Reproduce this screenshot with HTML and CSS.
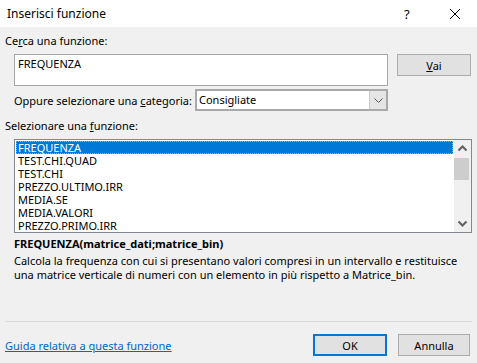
FILE: index.html
```html
<!DOCTYPE html>
<html lang="it">
<head>
    <meta charset="UTF-8">
    <title>Inserisci funzione</title>
    <link rel="stylesheet" href="styles.css">
</head>
<body>
    <div class="dialog">
        <div class="titlebar">
            <span class="title">Inserisci funzione</span>
            <span class="help">?</span>
            <svg class="close" width="12" height="12" viewBox="0 0 12 12">
                <path d="M1 1 L11 11 M11 1 L1 11" stroke="#000" stroke-width="1" fill="none"/>
            </svg>
        </div>

        <div class="content">
            <div class="label">Ce<u>r</u>ca una funzione:</div>
            <div class="search-row">
                <div class="search-box">FREQUENZA</div>
                <button class="btn btn-go"><u>V</u>ai</button>
            </div>
            <div class="category-row">
                <span>Oppure selezionare una <u>c</u>ategoria:</span>
                <div class="select">
                    <span class="select-value">Consigliate</span>
                    <span class="select-arrow">
                        <svg width="9" height="5" viewBox="0 0 9 5">
                            <path d="M0.5 0.5 L4.5 4.5 L8.5 0.5" stroke="#555" stroke-width="1" fill="none"/>
                        </svg>
                    </span>
                </div>
            </div>

            <div class="label label-list">Selezionare una <u>f</u>unzione:</div>
            <div class="listbox">
                <ul class="items">
                    <li class="selected">FREQUENZA</li>
                    <li>TEST.CHI.QUAD</li>
                    <li>TEST.CHI</li>
                    <li>PREZZO.ULTIMO.IRR</li>
                    <li>MEDIA.SE</li>
                    <li>MEDIA.VALORI</li>
                    <li>PREZZO.PRIMO.IRR</li>
                </ul>
                <div class="scrollbar">
                    <svg width="17" height="17" viewBox="0 0 17 17">
                        <path d="M4.5 10.5 L8.5 6.5 L12.5 10.5" stroke="#606060" stroke-width="2" fill="none"/>
                    </svg>
                    <div class="thumb"></div>
                    <svg class="down" width="17" height="17" viewBox="0 0 17 17">
                        <path d="M4.5 6.5 L8.5 10.5 L12.5 6.5" stroke="#606060" stroke-width="2" fill="none"/>
                    </svg>
                </div>
            </div>

            <div class="signature">FREQUENZA(matrice_dati;matrice_bin)</div>
            <p class="description">Calcola la frequenza con cui si presentano valori compresi in un intervallo e restituisce<br>una matrice verticale di numeri con un elemento in più rispetto a Matrice_bin.</p>

            <div class="separator"></div>

            <div class="footer">
                <a href="#" class="help-link">Guida relativa a questa funzione</a>
                <button class="btn btn-ok">OK</button>
                <button class="btn btn-cancel">Annulla</button>
            </div>
        </div>
    </div>
</body>
</html>
```

FILE: styles.css
```css
body {
    margin: 0;
    font-family: "Noto Sans", "Open Sans", sans-serif;
    font-size: 11px;
    color: #000;
    background-color: #f0f0f0;
}
.dialog {
    width: 477px;
    height: 363px;
    background: #f0f0f0;
    overflow: hidden;
}
.titlebar {
    height: 27px;
    background: #fff;
    display: flex;
    align-items: center;
    padding-left: 7px;
    font-size: 12px;
}
.title {
    flex: 1;
}
.help {
    width: 14px;
    margin-right: 31px;
    font-size: 13px;
}
.close {
    margin-right: 16px;
}
.content {
    padding: 0 5px;
}
.label {
    height: 14px;
    line-height: 14px;
    margin-top: 7px;
}
.search-row {
    display: flex;
    align-items: flex-start;
    margin: 6px 0 0 9px;
}
.search-box {
    width: 374px;
    height: 32px;
    box-sizing: border-box;
    border: 1px solid #a5a5a5;
    background: #fff;
    padding: 2px 3px;
    line-height: 14px;
}
.btn {
    font: inherit;
    color: #000;
    background: #e1e1e1;
    border: 1px solid #adadad;
    height: 22px;
    padding: 0;
    box-sizing: border-box;
}
.btn-go {
    width: 74px;
    margin-left: 9px;
}
.category-row {
    display: flex;
    align-items: center;
    justify-content: space-between;
    width: 374px;
    height: 22px;
    margin: 3px 0 0 9px;
}
.select {
    width: 193px;
    height: 22px;
    box-sizing: border-box;
    border: 2px solid #a9a9a9;
    background: #fff;
    display: flex;
    align-items: stretch;
}
.select-value {
    flex: 1;
    line-height: 18px;
    padding-left: 2px;
}
.select-arrow {
    width: 16px;
    background: #e5e5e5;
    border-left: 1px solid #c8c8c8;
    display: flex;
    align-items: center;
    justify-content: center;
}
.label-list {
    margin-top: 8px;
}
.listbox {
    margin: 6px 0 0 9px;
    width: 458px;
    height: 94px;
    box-sizing: border-box;
    border: 1px solid #828790;
    background: #fff;
    display: flex;
}
.items {
    flex: 1;
    list-style: none;
    margin: 0;
    padding: 1px 1px 0 1px;
    overflow: hidden;
}
.items li {
    height: 13px;
    line-height: 13px;
    padding-left: 2px;
}
.items li.selected {
    background: #0078d7;
    color: #fff;
    outline: 1px dotted #f0a040;
    outline-offset: -1px;
}
.scrollbar {
    width: 17px;
    background: #f0f0f0;
    display: flex;
    flex-direction: column;
}
.scrollbar svg {
    display: block;
}
.thumb {
    width: 15px;
    height: 22px;
    margin: 1px 0 0 0;
    background: #cdcdcd;
}
.scrollbar .down {
    margin-top: auto;
}
.signature {
    margin: 4px 0 0 9px;
    font-weight: bold;
    line-height: 14px;
    height: 14px;
}
.description {
    margin: 3px 0 0 9px;
    line-height: 14px;
    height: 28px;
    white-space: nowrap;
}
.separator {
    margin-top: 39px;
    height: 1px;
    background: #dadada;
}
.footer {
    display: flex;
    align-items: center;
    margin-top: 12px;
}
.help-link {
    flex: 1;
    color: #0066cc;
}
.btn-ok {
    width: 74px;
    border: 2px solid #0078d7;
}
.btn-cancel {
    width: 72px;
    margin-left: 11px;
    margin-right: 2px;
}
```
